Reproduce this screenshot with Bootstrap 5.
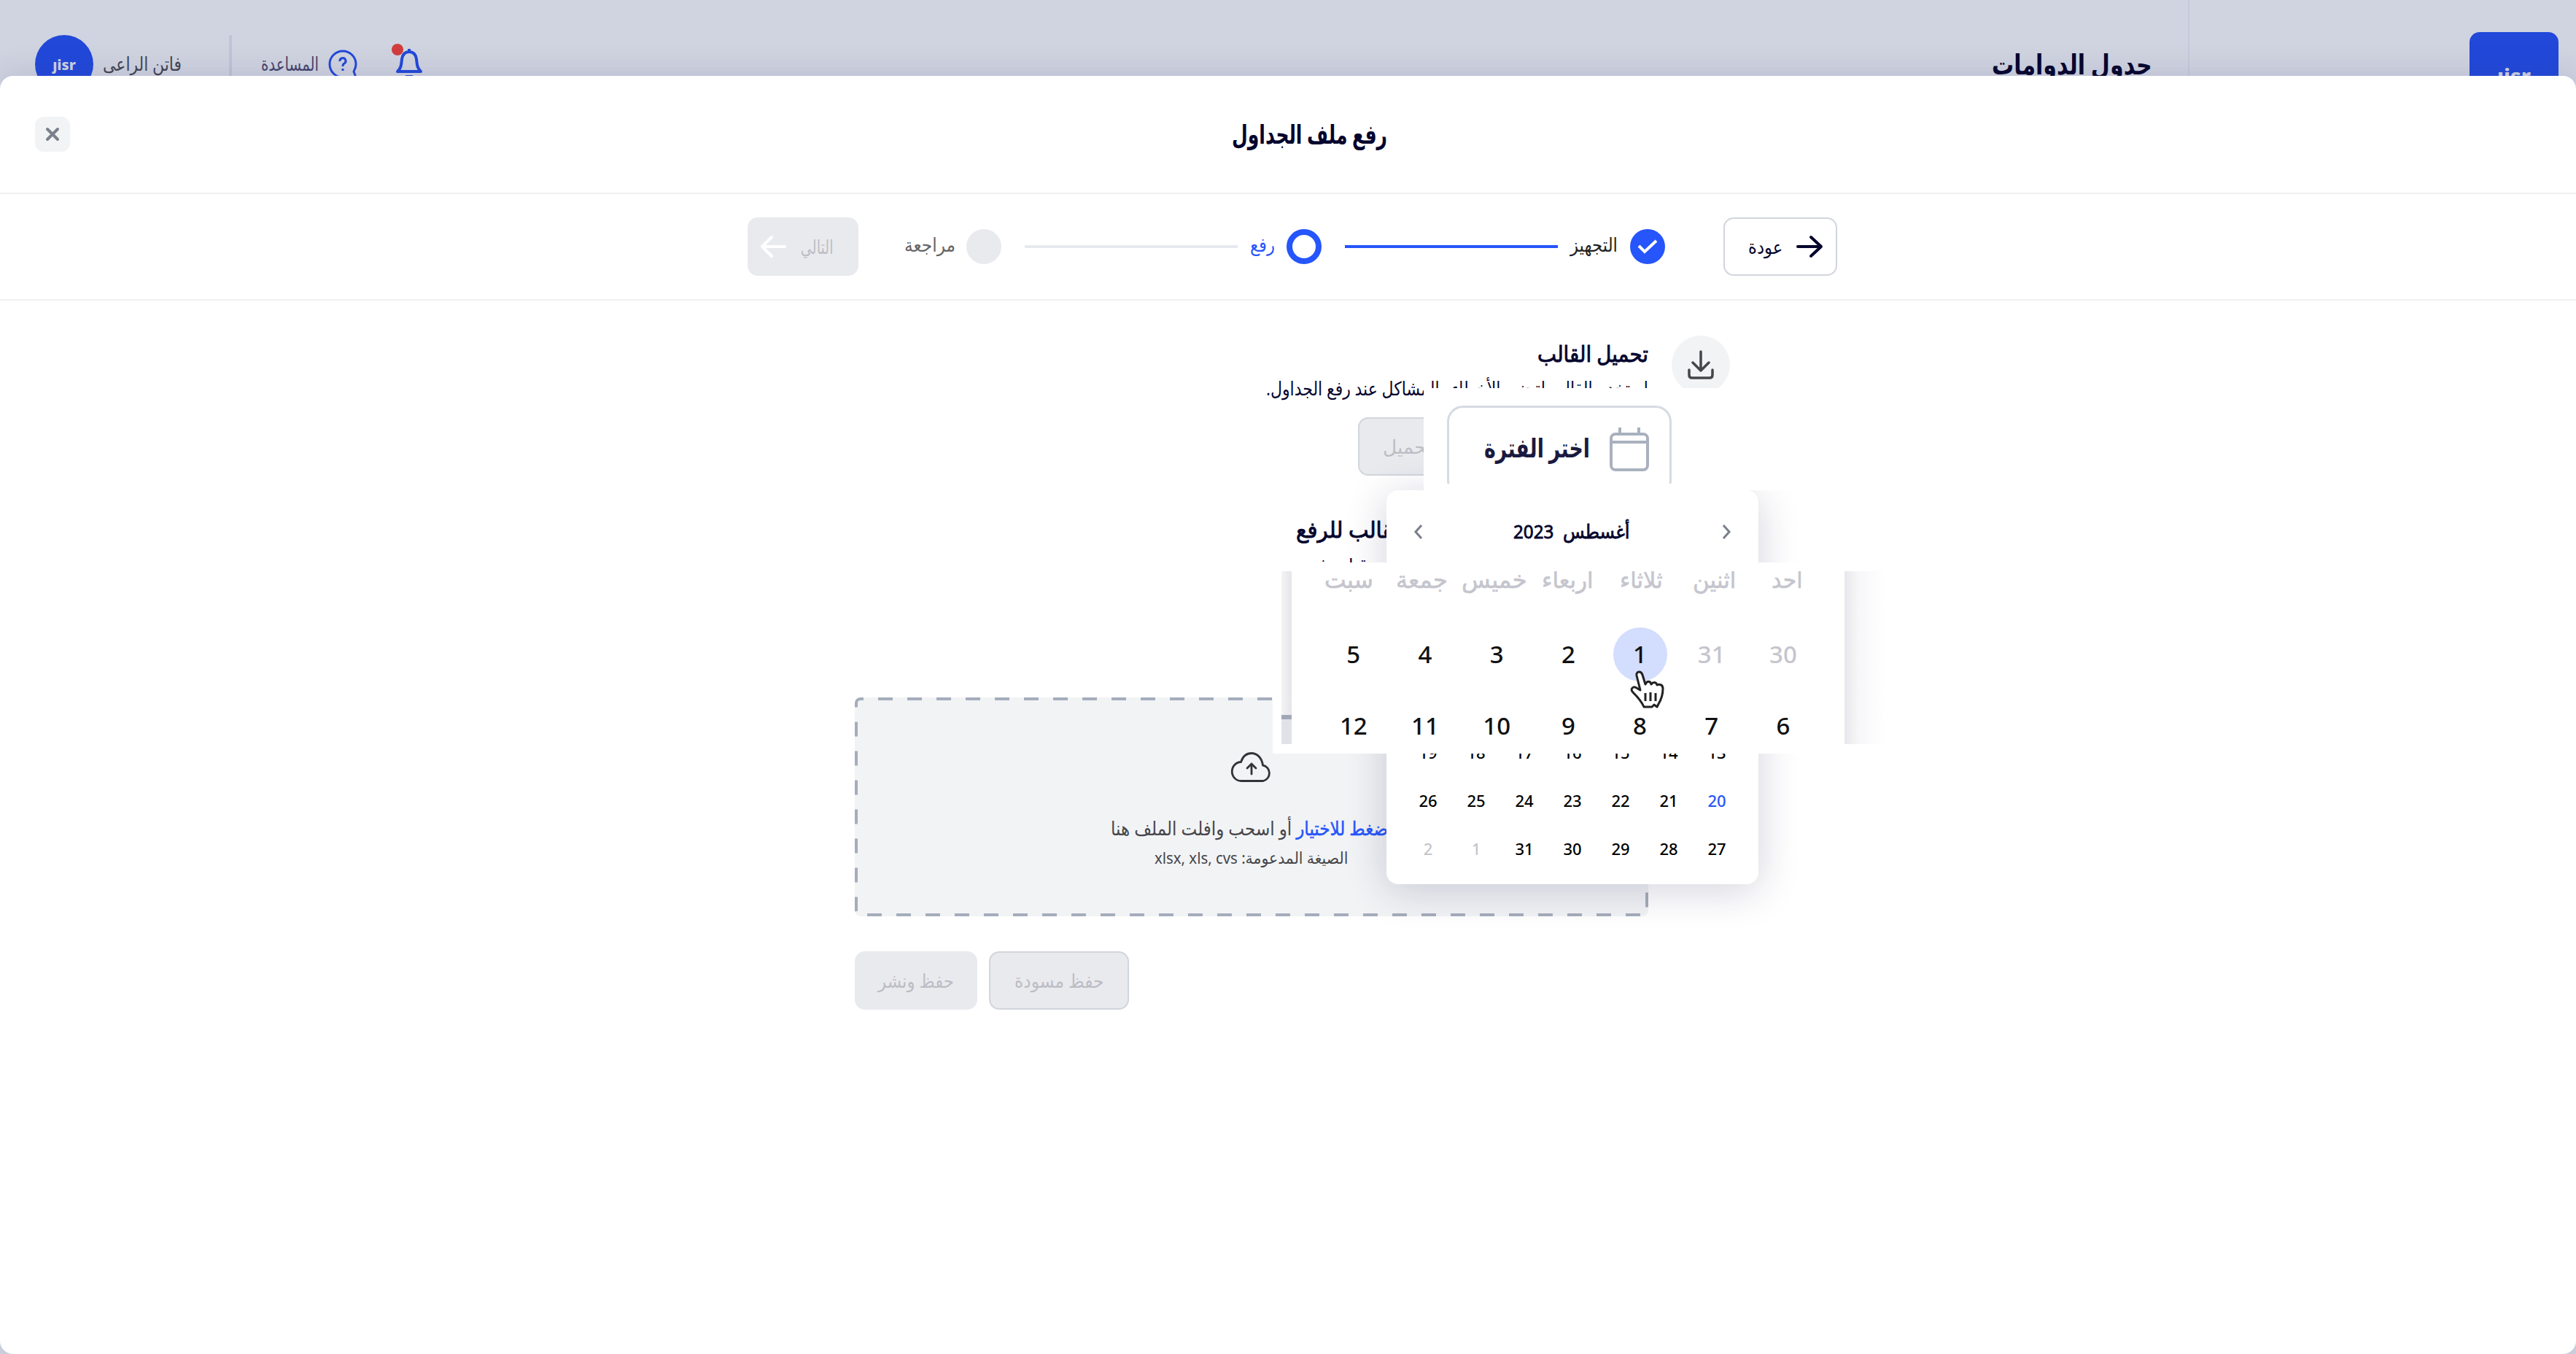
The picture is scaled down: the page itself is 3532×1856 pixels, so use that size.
<!DOCTYPE html>
<html lang="ar" dir="rtl">
<head>
<meta charset="utf-8">
<title>رفع ملف الجداول</title>
<link href="https://cdn.jsdelivr.net/npm/bootstrap@5.3.0/dist/css/bootstrap.min.css" rel="stylesheet">
<style>
html,body{height:1856px;overflow:hidden}
body{background:#d0d4e0;font-family:"Noto Sans","DejaVu Sans",sans-serif;font-size:26px;line-height:1.3;color:#05052d}
svg{display:block;flex:none;overflow:visible}
.fit{display:inline-block;white-space:nowrap;flex:none}
.fit>span{display:inline-block;white-space:nowrap;transform-origin:100% 50%}
/* top bar */
.topbar{height:176px}
.side{width:532px;border-left:2px solid #c5c9da;padding-right:24px}
.logo{width:122px;height:122px;margin-top:44px;border-radius:14px;background:#2148d9;color:#d0d4e0;font-weight:800;font-size:29px;line-height:44px;padding-top:38px}
.topmain{padding-right:49px;padding-left:48px}
.avatar{width:80px;height:80px;background:#2148d9;color:#d0d4e0;font-size:20px;font-weight:800;padding-top:2px;margin-right:13px}
.vbar{width:4px;height:80px;background:#c1c4d6;margin:0 40px 0 65px}
.dotred{top:-6px;left:-6px;width:16px;height:16px;background:#d23d3d}
/* sheet */
.sheet{top:104px;left:0;right:0;height:1752px;background:#fff;border-radius:18px;box-shadow:0 -4px 40px rgba(60,60,130,.16)}
.sheet-head{height:162px;border-bottom:2px solid #eff0f1;padding-left:48px;padding-right:36px}
.xbtn{width:48px;height:48px;border-radius:12px;background:#f2f3f5}
.steps{height:146px;border-bottom:2px solid #eff0f1;padding-right:1013px}
.b80{height:80px;border-radius:14px;border:2px solid transparent;padding:0;font-size:26px}
.b-off{background:#e9eaee;color:#bdbdc5}
.b-line{border-color:#d1d5dc}
.dotc{width:48px;height:48px;flex:none}
.bar4{width:292px;height:4px;flex:none}
.content{padding:48px 1160px 0 1172px}
.circ{width:80px;height:80px;background:#f2f3f5;margin-left:32px;flex:none}
.h-sec{font-size:30px;font-weight:400;-webkit-text-stroke:.9px currentColor}
.medium{font-weight:400;-webkit-text-stroke:.8px currentColor}
.zone{width:1088px;height:300px;border-radius:8px;background:#f2f3f5;color:#46464a}
.zone>svg.edge{position:absolute;inset:0}
.blue{color:#2555fb}
/* floating pieces */
.patch1{left:1952px;top:428px;width:540px;height:140px;background:#fff;padding:24px 0 0 32px;overflow:hidden}
.period{width:308px;height:124px;border:3px solid #d6dae2;border-radius:22px;padding-right:28px;padding-top:27px}
.cal{left:1901px;top:568px;width:510px;height:540px;border-radius:16px;background:#fff;box-shadow:0 8px 56px rgba(30,30,80,.2)}
.cal-week{display:grid;grid-template-columns:repeat(7,66px);height:66px;align-items:center;text-align:center;padding-right:24px;font-size:22px;font-weight:500;color:#000}
.patch2{left:1745px;top:667px;width:852px;height:262px;background:#fff;padding:12px 12px 13px 12px}
.lens{height:237px;overflow:hidden;position:relative}
.lens-edge{width:14px;background:linear-gradient(90deg,#f3f3f5,#e6e6ea)}
.lens-edge i{display:block;height:6px;margin-top:197px;background:#a0a8b8}
.lens-edge b{display:block;height:34px;background:#e1e2e8}
.lens-in{width:758px}
.lens-shade{width:56px;background:linear-gradient(90deg,#e8e8ec,#f7f7f9 35%,#fff)}
.week{display:grid;grid-template-columns:repeat(7,98.2px);text-align:center;padding-right:35px;font-size:33px;font-weight:500;color:#111;line-height:44px}
.names{grid-template-columns:repeat(7,100.3px);padding-right:28px;height:92px;font-size:32px;line-height:22px}
.names .fit{-webkit-text-stroke:.6px currentColor}
.pale{color:#c5c5ce}
.day1{width:74px;height:74px;background:#d3ddfd;margin:-15px 0}
.hand{left:477px;top:136px}
</style>
</head>
<body>
<div class="topbar d-flex">
  <div class="side flex-shrink-0"><div class="logo text-center" dir="ltr">ȷisr</div></div>
  <div class="topmain d-flex flex-grow-1 align-items-center">
    <b class="fit" style="font-size:38px" data-w="220"><span>جدول الدوامات</span></b>
    <div class="d-flex align-items-center me-auto">
      <div class="position-relative" style="margin-left:53px"><svg width="36" height="44" viewBox="0 0 36 44" fill="none" stroke="#2148d9" stroke-width="4" stroke-linejoin="round"><path d="M2 32h32c-5-5-5-8-6-17C27 9 24 5 18 5S9 9 8 15c-1 9-1 12-6 17zM18 5V1M13 39h10"/></svg><span class="dotred rounded-circle position-absolute"></span></div>
      <svg width="40" height="40" viewBox="0 0 40 40" fill="none" stroke="#2148d9" stroke-width="3"><path d="M38 38H20A18 18 0 1 1 38 20c0 5-2 8-3 10z" stroke-linejoin="round"/><path d="M16 16a4 4 0 1 1 6 3c-2 1-2 2-2 4M20 26v3"/></svg>
      <span class="fit" style="color:#44446c;margin-right:13px" data-w="79"><span>المساعدة</span></span>
      <div class="vbar"></div>
      <span class="fit" style="color:#44444f" data-w="108"><span>فاتن الراعى</span></span>
      <div class="avatar rounded-circle d-flex align-items-center justify-content-center" dir="ltr">ȷisr</div>
    </div>
  </div>
</div>
<main class="sheet position-absolute">
  <header class="sheet-head d-flex align-items-center">
    <h1 class="flex-grow-1 text-center m-0 pb-1 fs-1 fw-bold"><span class="fit" style="font-size:36px" data-w="213"><span>رفع ملف الجداول</span></span></h1>
    <div class="xbtn d-flex align-items-center justify-content-center"><svg width="18" height="18" viewBox="0 0 18 18" stroke="#79808a" stroke-width="4" stroke-linecap="round"><path d="M2 2l14 14M16 2L2 16"/></svg></div>
  </header>
  <section class="steps d-flex align-items-center">
    <button class="btn b80 b-line bg-white d-flex align-items-center flex-shrink-0" style="width:156px;padding-right:18px"><svg width="36" height="30" viewBox="0 0 36 30" fill="none" stroke="#05052d" stroke-width="4" stroke-linecap="round" stroke-linejoin="round"><path d="M2 15h31M20 2l14 13-14 13"/></svg><span class="fit" style="margin-right:19px;color:#05052d" data-w="47"><span>عودة</span></span></button>
    <div class="dotc rounded-circle d-flex align-items-center justify-content-center" style="background:#2555fb;margin-right:80px"><svg width="28" height="20" viewBox="0 0 28 20" fill="none" stroke="#fff" stroke-width="4"><path d="M2 9l8 8L26 2"/></svg></div>
    <span class="fit" style="margin:-4px 17px 0;color:#222" data-w="65"><span>التجهيز</span></span>
    <div class="bar4" style="background:#2555fb"></div>
    <div class="dotc rounded-circle" style="border:8px solid #2555fb;margin:0 32px 0 16px"></div>
    <span class="fit blue" style="margin-top:-4px" data-w="34"><span>رفع</span></span>
    <div class="bar4" style="background:#e6eaee;margin-right:17px"></div>
    <div class="dotc rounded-circle" style="background:#e9eaee;margin:0 32px 0 15px"></div>
    <span class="fit" style="color:#666;margin-top:-4px" data-w="70"><span>مراجعة</span></span>
    <button class="btn b80 b-off d-flex align-items-center flex-shrink-0" style="width:152px;margin-right:63px;padding-right:32px"><span class="fit" data-w="45"><span>التالي</span></span><svg style="margin-right:20px" width="35" height="30" viewBox="0 0 35 30" fill="none" stroke="#fff" stroke-width="4" stroke-linecap="round" stroke-linejoin="round"><path d="M33 15H2M15 2L2 15l13 13"/></svg></button>
  </section>
  <section class="content">
    <div class="d-flex">
      <div class="circ rounded-circle d-flex align-items-center justify-content-center"><svg width="36" height="40" viewBox="0 0 36 40" fill="none" stroke="#46464a" stroke-width="3.5" stroke-linecap="round" stroke-linejoin="round"><path d="M18 2v26M7 17l11 11 11-11M2 27v7q0 4 4 4h24q4 0 4-4v-7"/></svg></div>
      <div style="width:1088px">
        <div style="height:112px;padding-top:2px;line-height:46px">
          <div><b class="fit h-sec" data-w="152"><span>تحميل القالب</span></b></div>
          <div><span class="fit" data-w="524"><span>استخدم القالب لتجنب الأخطاء والمشاكل عند رفع الجداول.</span></span></div>
        </div>
        <div class="d-flex" style="padding-right:262px"><button class="btn b80 b-off b-line d-flex align-items-center justify-content-center" style="width:136px"><span class="fit" data-w="68"><span>تحميل</span></span></button></div>
        <div style="height:304px;padding-top:50px;line-height:48px">
          <div><b class="fit h-sec" data-w="483"><span>اختر ملف الجداول بعد تعبئة القالب للرفع</span></b></div>
          <div><span class="fit" data-w="476"><span>تأكد من إدخال جميع البيانات في الملف قبل رفعه</span></span></div>
        </div>
        <div class="zone position-relative d-flex flex-column align-items-center">
          <svg class="edge" width="1088" height="300"><clipPath id="z"><rect width="1088" height="300" rx="8"/></clipPath><rect width="1088" height="300" rx="8" fill="none" stroke="#a5adbb" stroke-width="8" stroke-dasharray="20 20" stroke-dashoffset="16" clip-path="url(#z)"/></svg>
          <svg style="margin-top:75px" width="56" height="41" viewBox="0 0 56 41" fill="none" stroke="#333338" stroke-width="2.8" stroke-linecap="round" stroke-linejoin="round"><path d="M14 39.500A12.500 13 0 0 1 13.500 13.500C16 6 21 1.500 28 1.500S42 7 43.500 18A11 11 0 0 1 44 39.500zM28 30V16M22 22l6-6 6 6"/></svg>
          <div style="margin-top:47px;line-height:32px"><span class="fit" data-w="386"><span><span class="blue" style="-webkit-text-stroke:.5px currentColor">اضغط للاختيار</span> أو اسحب وافلت الملف هنا</span></span></div>
          <div style="margin-top:10px;line-height:28px;font-size:22px"><span class="fit" data-w="265"><span>الصيغة المدعومة: <bdi>xlsx, xls, cvs</bdi></span></span></div>
        </div>
        <div class="d-flex justify-content-end" style="gap:16px;margin-top:48px">
          <button class="btn b80 b-off b-line" style="width:192px"><span class="fit" data-w="122"><span>حفظ مسودة</span></span></button>
          <button class="btn b80 b-off" style="width:168px"><span class="fit" data-w="104"><span>حفظ ونشر</span></span></button>
        </div>
      </div>
    </div>
  </section>
  <div class="cal position-absolute">
    <div class="d-flex align-items-center justify-content-between" style="height:113px;padding:0 38px">
      <svg width="12" height="20" viewBox="0 0 12 20" fill="none" stroke="#79808a" stroke-width="3"><path d="M2 1l8 9-8 9"/></svg>
      <span class="fit medium" style="margin-right:3px;font-size:26px" data-w="160"><span>أغسطس&nbsp; 2023</span></span>
      <svg width="12" height="20" viewBox="0 0 12 20" fill="none" stroke="#79808a" stroke-width="3"><path d="M10 1L2 10l8 9"/></svg>
    </div>
    <div style="height:213px"></div>
    <div class="cal-week"><span>13</span><span>14</span><span>15</span><span>16</span><span>17</span><span>18</span><span>19</span></div>
    <div class="cal-week"><span class="blue">20</span><span>21</span><span>22</span><span>23</span><span>24</span><span>25</span><span>26</span></div>
    <div class="cal-week"><span>27</span><span>28</span><span>29</span><span>30</span><span>31</span><span class="pale">1</span><span class="pale">2</span></div>
  </div>
  <div class="patch1 position-absolute"><div style="height:107px;overflow:hidden" dir="ltr"><div class="period d-flex" dir="rtl">
    <svg width="54" height="60" viewBox="0 0 54 60" fill="none" stroke="#a9b1be" stroke-width="4"><rect x="2" y="9" width="50" height="49" rx="6"/><path d="M2 20h50M14 0v9M40 0v9"/></svg>
    <span class="fit fw-semibold" style="font-size:36px;margin:5px 27px 0 0;color:#1a1a40" data-w="145"><span>اختر الفترة</span></span></div></div></div>
  <div class="patch2 position-absolute"><div class="lens d-flex" dir="ltr">
    <div class="lens-edge"><i></i><b></b></div>
    <div class="lens-in" dir="rtl">
      <div class="week names pale"><span><span class="fit" data-w="42"><span>احد</span></span></span><span><span class="fit" data-w="59"><span>اثنين</span></span></span><span><span class="fit" data-w="59"><span>ثلاثاء</span></span></span><span><span class="fit" data-w="70"><span>اربعاء</span></span></span><span><span class="fit" data-w="90"><span>خميس</span></span></span><span><span class="fit" data-w="71"><span>جمعة</span></span></span><span><span class="fit" data-w="67"><span>سبت</span></span></span></div>
      <div class="week" style="height:98px"><span class="pale">30</span><span class="pale">31</span><span class="d-flex justify-content-center" style="height:44px"><span class="day1 rounded-circle d-flex align-items-center justify-content-center">1</span></span><span>2</span><span>3</span><span>4</span><span>5</span></div>
      <div class="week"><span>6</span><span>7</span><span>8</span><span>9</span><span>10</span><span>11</span><span>12</span></div>
    </div>
    <div class="lens-shade"></div>
    <svg class="hand position-absolute" width="48" height="52" viewBox="0 0 48 52" fill="#fff" stroke="#222" stroke-width="3" stroke-linejoin="round"><path d="M15 27L10 7c-1-6 6-7 8-1l4 13c2-5 7-5 8 0 3-4 7-3 8 1 4-2 8 0 8 5 0 9-3 16-6 21l-2 4-4-3-3 3H20c-3-7-8-13-15-20-5-5 1-9 5-6z"/><path d="M22 31v11M29 30v12M36 31v11" fill="none"/></svg>
  </div></div>
</main>
<script src="https://cdn.jsdelivr.net/npm/bootstrap@5.3.0/dist/js/bootstrap.bundle.min.js"></script>
<script>
/* Scale each label horizontally so it occupies its designed width. */
document.querySelectorAll('.fit').forEach(function(el){
  var w=+el.dataset.w,s=el.firstElementChild,n=s.offsetWidth;
  el.style.width=w+'px';
  s.style.transform='scaleX('+(w/n).toFixed(4)+')';
});
</script>
</body>
</html>
